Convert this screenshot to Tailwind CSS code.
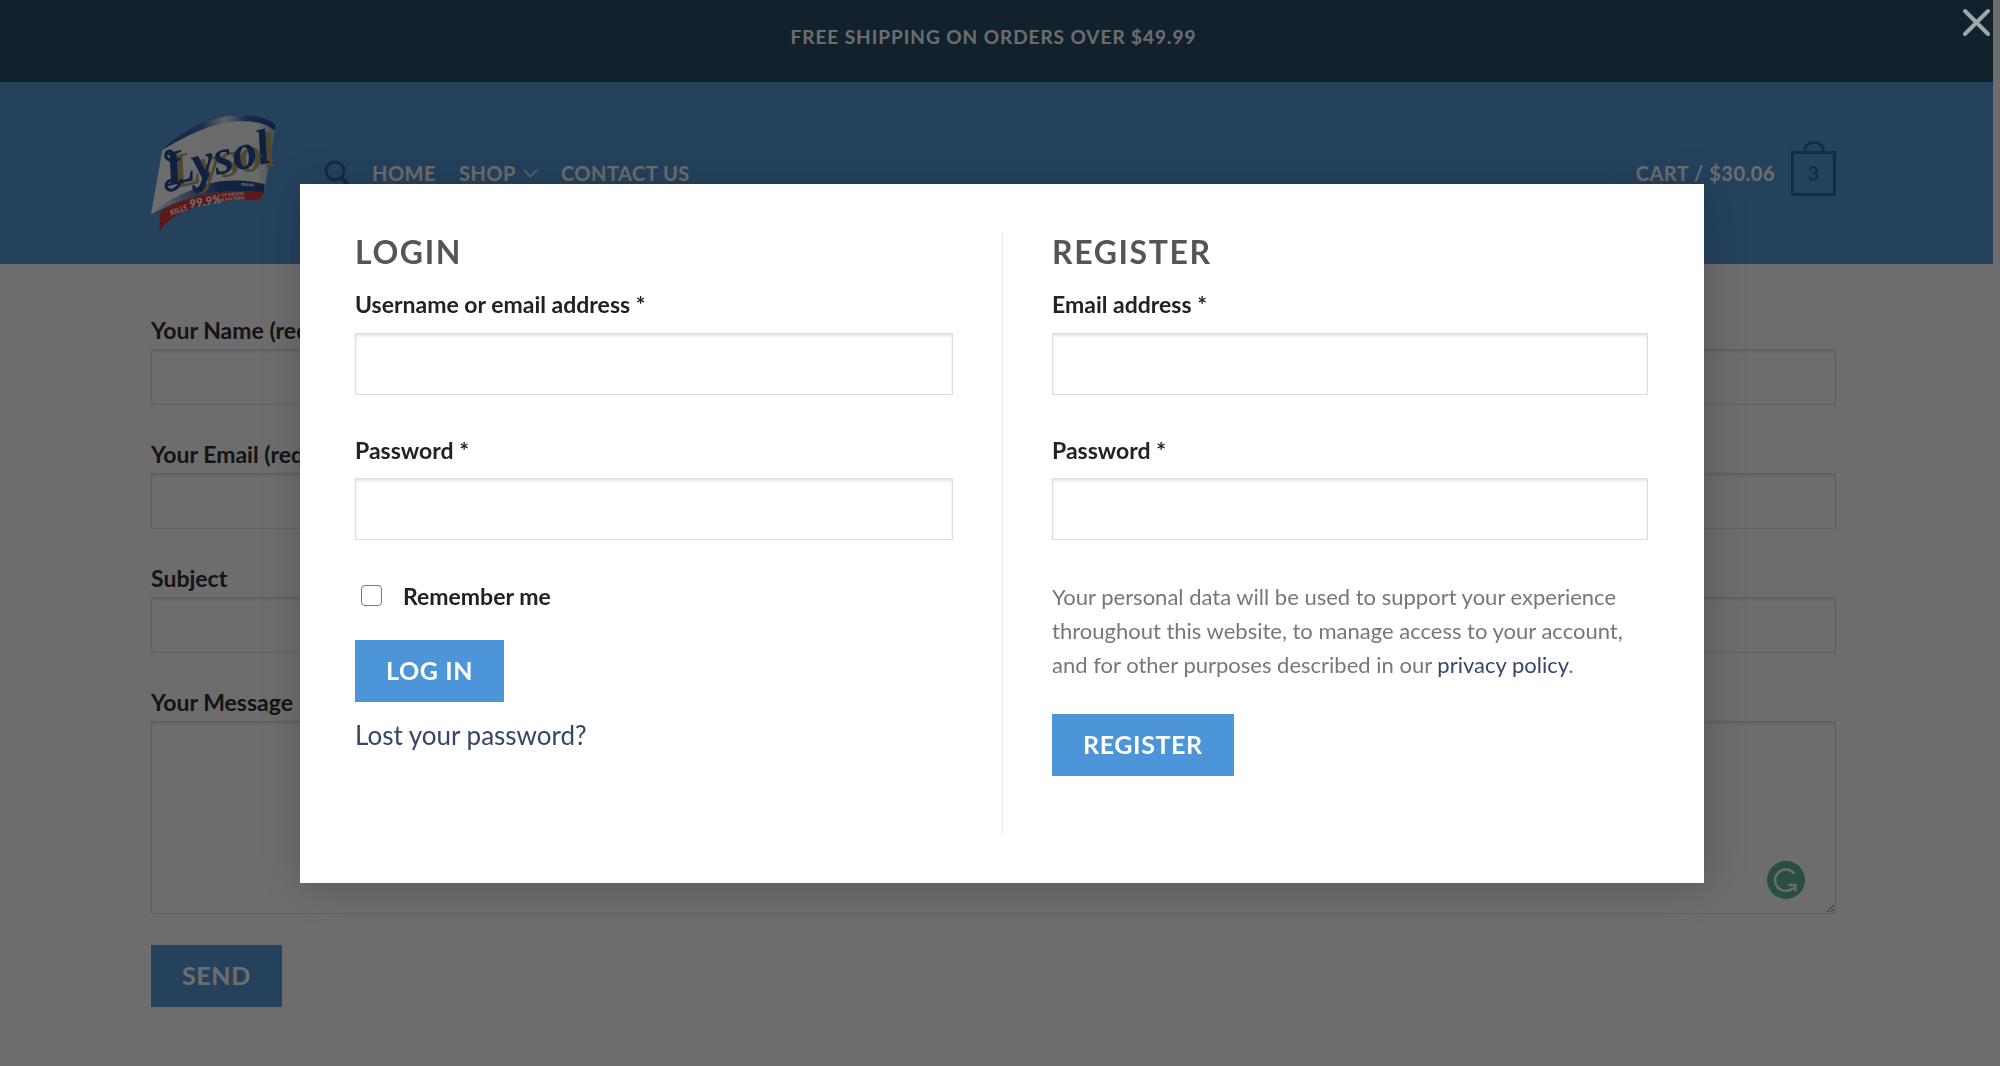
<!DOCTYPE html>
<html lang="en">
<head>
    <meta charset="UTF-8">
    <meta name="viewport" content="width=device-width, initial-scale=1.0">
    <title>Contact Us - Lysol</title>
    <script src="https://cdn.jsdelivr.net/npm/@tailwindcss/browser@4"></script>
</head>
<body class="min-h-screen overflow-hidden bg-white font-['Lato',sans-serif] text-[#222]">

    <!-- Page -->
    <div class="pr-[7px]">
        <div class="h-[82px] bg-[#1a4460] pt-[25px] pr-[6px] text-center text-[19px] leading-6 font-bold tracking-wider text-white">
            FREE SHIPPING ON ORDERS OVER $49.99
        </div>

        <header class="flex h-[182px] items-center bg-[#4b95d8] pr-[157px] pl-[151px] text-xl font-bold tracking-wide text-white">
            <a href="#" aria-label="Lysol" class="mr-[48px] block tracking-normal">
                <svg class="h-[116px] w-[125px]" viewBox="66 73 374 347">
                    <defs>
                        <linearGradient id="band" x1="0" x2="1">
                            <stop offset="0" stop-color="#1b4a96"/>
                            <stop offset=".35" stop-color="#3a66a8"/>
                            <stop offset=".55" stop-color="#dfe8f2"/>
                            <stop offset=".75" stop-color="#2b5aa5"/>
                            <stop offset="1" stop-color="#173f8c"/>
                        </linearGradient>
                        <linearGradient id="face" x1="0" x2="1">
                            <stop offset="0" stop-color="#fff"/>
                            <stop offset=".85" stop-color="#f4f7fa"/>
                            <stop offset="1" stop-color="#8fb9d8"/>
                        </linearGradient>
                        <linearGradient id="foot" x1="0" x2="1">
                            <stop offset="0" stop-color="#fff"/>
                            <stop offset=".4" stop-color="#4d78b5"/>
                            <stop offset=".6" stop-color="#1b4a96"/>
                            <stop offset="1" stop-color="#173f8c"/>
                        </linearGradient>
                    </defs>
                    <path fill="url(#face)" d="M100 178C180 122 260 88 340 88C385 88 420 97 438 112L404 305C300 292 180 306 66 369Z"/>
                    <path fill="url(#band)" d="M101 177C160 118 240 78 325 74C380 73 425 86 438 103L436 120C410 95 370 90 325 92C240 98 170 138 101 177Z"/>
                    <path fill="url(#foot)" d="M66 369C120 320 180 300 240 278C290 264 360 268 407 280L403 306C290 292 190 304 66 369Z"/>
                    <path fill="#dc2b27" d="M98 357C180 310 290 296 380 302C396 303 402 305 401 312C398 324 385 328 370 328C280 324 150 340 92 419C89 404 91 378 98 357Z"/>
                    <g font-family="Liberation Serif, serif" font-style="italic" font-weight="700" font-size="148" transform="rotate(-13 255 205)">
                        <text class="[text-shadow:5px_4px_0_#b5a06a]" x="101" y="253" fill="#173f8c">Lysol</text>
                    </g>
                    <!-- loops of the L and the y -->
                    <g fill="none" stroke="#173f8c" stroke-width="9" stroke-linecap="round">
                        <path d="M150 205C120 218 104 200 113 185C118 178 128 180 130 186"/>
                        <path d="M128 268C106 272 106 296 126 298C142 298 150 284 156 268"/>
                        <path d="M196 290C198 308 216 304 222 288L236 250"/>
                    </g>
                    <circle cx="396" cy="196" r="5" fill="#4d78b5"/>
                    <g fill="#fff" font-family="Lato, sans-serif" font-style="italic" font-weight="900">
                        <text x="335" y="284" font-size="12" transform="rotate(5 335 284)">BRAND</text>
                        <text x="126" y="374" font-size="22" transform="rotate(-20 126 374)">KILLS</text>
                        <text x="183" y="352" font-size="35" transform="rotate(-10 183 352)">99.9%</text>
                        <text x="277" y="317" font-size="13" transform="rotate(-4 277 317)">OF VIRUSES</text>
                        <text x="277" y="330" font-size="13" transform="rotate(-4 277 330)">&amp; BACTERIA</text>
                    </g>
                </svg>
            </a>
            <nav class="flex items-center gap-[23px]">
                <button type="button" aria-label="Search">
                    <svg class="h-[26px] w-[25px]" viewBox="0 0 25 26" fill="none" stroke="#1f5aac" stroke-width="3">
                        <circle cx="11" cy="11" r="9"/>
                        <path d="M17 17L24 25" stroke-width="4"/>
                    </svg>
                </button>
                <a href="#">HOME</a>
                <a href="#" class="flex items-center gap-[7px]">SHOP
                    <svg class="h-[9px] w-[15px]" viewBox="0 0 15 9" fill="none" stroke="#fff" stroke-opacity=".7" stroke-width="2"><path d="M1 1L7.500 7.500L14 1"/></svg>
                </a>
                <a href="#">CONTACT US</a>
            </nav>
            <a href="#" class="ml-auto flex items-center">
                <span class="mr-[23px] h-12 w-px bg-[#458bcb]"></span>
                CART / $30.06
                <span class="relative ml-4 flex size-[45px] items-center justify-center border-[3px] border-[#1f5aac] text-[#1f5aac]">3
                    <span class="absolute -top-[13px] h-[10px] w-[22px] rounded-t-full border-[3px] border-b-0 border-[#1f5aac]"></span>
                </span>
            </a>
        </header>

        <form class="relative pt-12 pr-[157px] pl-[151px] text-[23px] font-bold">
            <label for="your-name" class="mb-px block leading-9">Your Name (required)</label>
            <input id="your-name" type="text" class="mb-[31px] block h-14 w-full border border-[#ddd] px-3 font-normal shadow-[inset_0_2px_3px_rgba(0,0,0,.1)]">
            <label for="your-email" class="mb-px block leading-9">Your Email (required)</label>
            <input id="your-email" type="email" class="mb-[31px] block h-14 w-full border border-[#ddd] px-3 font-normal shadow-[inset_0_2px_3px_rgba(0,0,0,.1)]">
            <label for="subject" class="mb-px block leading-9">Subject</label>
            <input id="subject" type="text" class="mb-[31px] block h-14 w-full border border-[#ddd] px-3 font-normal shadow-[inset_0_2px_3px_rgba(0,0,0,.1)]">
            <label for="message" class="mb-px block leading-9">Your Message</label>
            <div class="relative mb-[31px]">
                <textarea id="message" class="block h-[193px] w-full border border-[#ddd] px-3 font-normal shadow-[inset_0_2px_3px_rgba(0,0,0,.1)]"></textarea>
                <svg class="absolute right-[31px] bottom-[15px] size-[38px]" viewBox="0 0 39 39">
                    <circle cx="19.500" cy="19.500" r="19.500" fill="#54b48f"/>
                    <path d="M28 13A11 11 0 1 0 27 27.500M22 24.500H29V31" fill="none" stroke="#fff" stroke-width="2.500"/>
                </svg>
            </div>
            <button type="submit" class="h-[62px] bg-[#4b95d8] px-[31px] text-[25px] tracking-wide text-white">SEND</button>
        </form>
    </div>

    <!-- Login / register popup -->
    <div class="fixed inset-0 flex items-center justify-center bg-[#0b0b0b]/60 pl-1">
        <button type="button" aria-label="Close" class="absolute top-[8px] right-[9px]">
            <svg class="size-[29px]" viewBox="0 0 29 29" fill="none" stroke="#fff" stroke-opacity=".6" stroke-width="4" stroke-linecap="round"><path d="M3 3L26 26M26 3L3 26"/></svg>
        </button>

        <div class="grid w-full max-w-[1404px] grid-cols-2 bg-white py-12 shadow-[3px_3px_40px_rgba(0,0,0,.2)]">
            <form class="pr-[49px] pb-[60px] pl-[55px]">
                <h3 class="mb-[14px] text-[32px] leading-10 font-bold tracking-wider text-[#555]">LOGIN</h3>
                <label for="username" class="mb-[11px] block text-[23px] leading-9 font-bold">Username or email address *</label>
                <input id="username" type="text" class="mb-[37px] block h-[62px] w-full border border-[#ddd] px-3 text-[25px] shadow-[inset_0_2px_3px_rgba(0,0,0,.1)]">
                <label for="password" class="mb-[10px] block text-[23px] leading-9 font-bold">Password *</label>
                <input id="password" type="password" class="mb-[38px] block h-[62px] w-full border border-[#ddd] px-3 text-[25px] shadow-[inset_0_2px_3px_rgba(0,0,0,.1)]">
                <div class="mb-[26px] flex items-center pl-[6px]">
                    <input id="remember" type="checkbox" class="size-[21px] appearance-none rounded-[4px] border border-[#767676] bg-white">
                    <label for="remember" class="pl-[21px] text-[23px] leading-9 font-bold">Remember me</label>
                </div>
                <button type="submit" class="mb-3 block h-[62px] bg-[#4b95d8] px-[31px] text-[25px] font-bold tracking-wide text-white">LOG IN</button>
                <a href="#" class="text-[26px] leading-[42px] text-[#34466a]">Lost your password?</a>
            </form>

            <form class="border-l border-[#ececec] pr-[56px] pb-[59px] pl-[49px]">
                <h3 class="mb-[14px] text-[32px] leading-10 font-bold tracking-wider text-[#555]">REGISTER</h3>
                <label for="reg-email" class="mb-[11px] block text-[23px] leading-9 font-bold">Email address *</label>
                <input id="reg-email" type="email" class="mb-[37px] block h-[62px] w-full border border-[#ddd] px-3 text-[25px] shadow-[inset_0_2px_3px_rgba(0,0,0,.1)]">
                <label for="reg-password" class="mb-[10px] block text-[23px] leading-9 font-bold">Password *</label>
                <input id="reg-password" type="password" class="mb-10 block h-[62px] w-full border border-[#ddd] px-3 text-[25px] shadow-[inset_0_2px_3px_rgba(0,0,0,.1)]">
                <p class="mb-8 text-[22px] leading-[34px] text-[#777]">
                    Your personal data will be used to support your experience throughout this website, to manage access to your account, and for other purposes described in our <a href="#" class="text-[#34466a]">privacy policy</a>.
                </p>
                <button type="submit" class="block h-[62px] bg-[#4b95d8] px-[31px] text-[25px] font-bold tracking-wide text-white">REGISTER</button>
            </form>
        </div>
    </div>
</body>
</html>
